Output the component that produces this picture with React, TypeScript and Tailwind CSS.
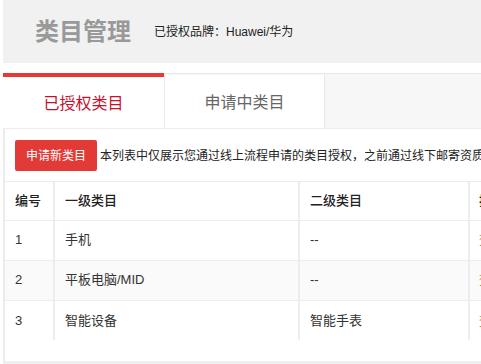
import React from "react";

const rows = [
  { id: "1", a: "手机", b: "--", bg: "bg-white" },
  { id: "2", a: "平板电脑/MID", b: "--", bg: "bg-[#fafafa]" },
  { id: "3", a: "智能设备", b: "智能手表", bg: "bg-white" },
];

export default function App() {
  return (
    <div
      className="w-[481px] h-[364px] overflow-hidden bg-white pl-[3px] flex flex-col"
      style={{ fontFamily: '"Liberation Sans", "Noto Sans CJK SC", sans-serif' }}
    >
      <div className="h-[63px] shrink-0 bg-[#f1f1f1] flex items-center pl-[32px]">
        <span className="text-[24px] leading-none font-bold text-[#999999] whitespace-nowrap">类目管理</span>
        <span className="ml-[23px] text-[12px] leading-none text-[#222222] whitespace-nowrap">已授权品牌：Huawei/华为</span>
      </div>
      <div className="h-[10px] shrink-0" />
      <div className="h-[55px] shrink-0 flex bg-[#f7f7f7] border-t border-[#e8e8e8]">
        <div className="w-[161px] -mt-px bg-white border-t-4 border-[#e53935] flex items-center justify-center">
          <span className="text-[16px] leading-none text-[#c8102e] mt-[3px]">已授权类目</span>
        </div>
        <div className="w-[161px] bg-white border-l border-r border-[#e8e8e8] mt-px flex items-center justify-center">
          <span className="text-[16px] leading-none text-[#666666] mt-[3px]">申请中类目</span>
        </div>
        <div className="flex-1" />
      </div>
      <div className="flex-1 min-h-0 bg-white border-l-2 border-[#ececec] border-t border-t-[#ececec] border-b-[3px] border-b-[#f0f0f0] flex flex-col overflow-hidden">
        <div className="flex items-center pl-[10px] pt-[11px] h-[42px] shrink-0 whitespace-nowrap">
          <button className="h-[31px] w-[82px] shrink-0 rounded-[2px] bg-[#e23a36] text-white text-[12px] leading-none">
            申请新类目
          </button>
          <span className="ml-[3px] text-[12px] leading-none text-[#222222]">
            本列表中仅展示您通过线上流程申请的类目授权，之前通过线下邮寄资质申请的类目授权请联系客服查询
          </span>
        </div>
        <div className="mt-[10px] border-t border-[#ebebeb]">
          <table className="table-fixed border-collapse w-[614px] text-[13px] text-[#333333]">
            <colgroup>
              <col className="w-[49px]" />
              <col className="w-[245px]" />
              <col className="w-[170px]" />
              <col className="w-[150px]" />
            </colgroup>
            <thead>
              <tr className="h-[38px] bg-white">
                <th className="text-left font-medium text-[#222222] pl-[10px] border-b border-r-2 border-[#ededed] whitespace-nowrap">编号</th>
                <th className="text-left font-medium text-[#222222] pl-[10px] border-b border-r-2 border-[#ededed]">一级类目</th>
                <th className="text-left font-medium text-[#222222] pl-[10px] border-b border-r-2 border-[#ededed]">二级类目</th>
                <th className="text-left font-medium text-[#222222] pl-[9px] border-b border-[#ededed] whitespace-nowrap">操作</th>
              </tr>
            </thead>
            <tbody>
              {rows.map((r, i) => (
                <tr key={r.id} className={`h-[40px] ${r.bg}`}>
                  <td className={`pl-[10px] border-r-2 border-[#ededed] ${i < 2 ? "border-b" : ""}`}>{r.id}</td>
                  <td className={`pl-[10px] border-r-2 border-[#ededed] ${i < 2 ? "border-b" : ""}`}>{r.a}</td>
                  <td className={`pl-[10px] border-r-2 border-[#ededed] ${i < 2 ? "border-b" : ""}`}>{r.b}</td>
                  <td className={`pl-[9px] border-[#ededed] text-[#e8890c] whitespace-nowrap ${i < 2 ? "border-b" : ""}`}>查看详情</td>
                </tr>
              ))}
            </tbody>
          </table>
        </div>
      </div>
    </div>
  );
}
